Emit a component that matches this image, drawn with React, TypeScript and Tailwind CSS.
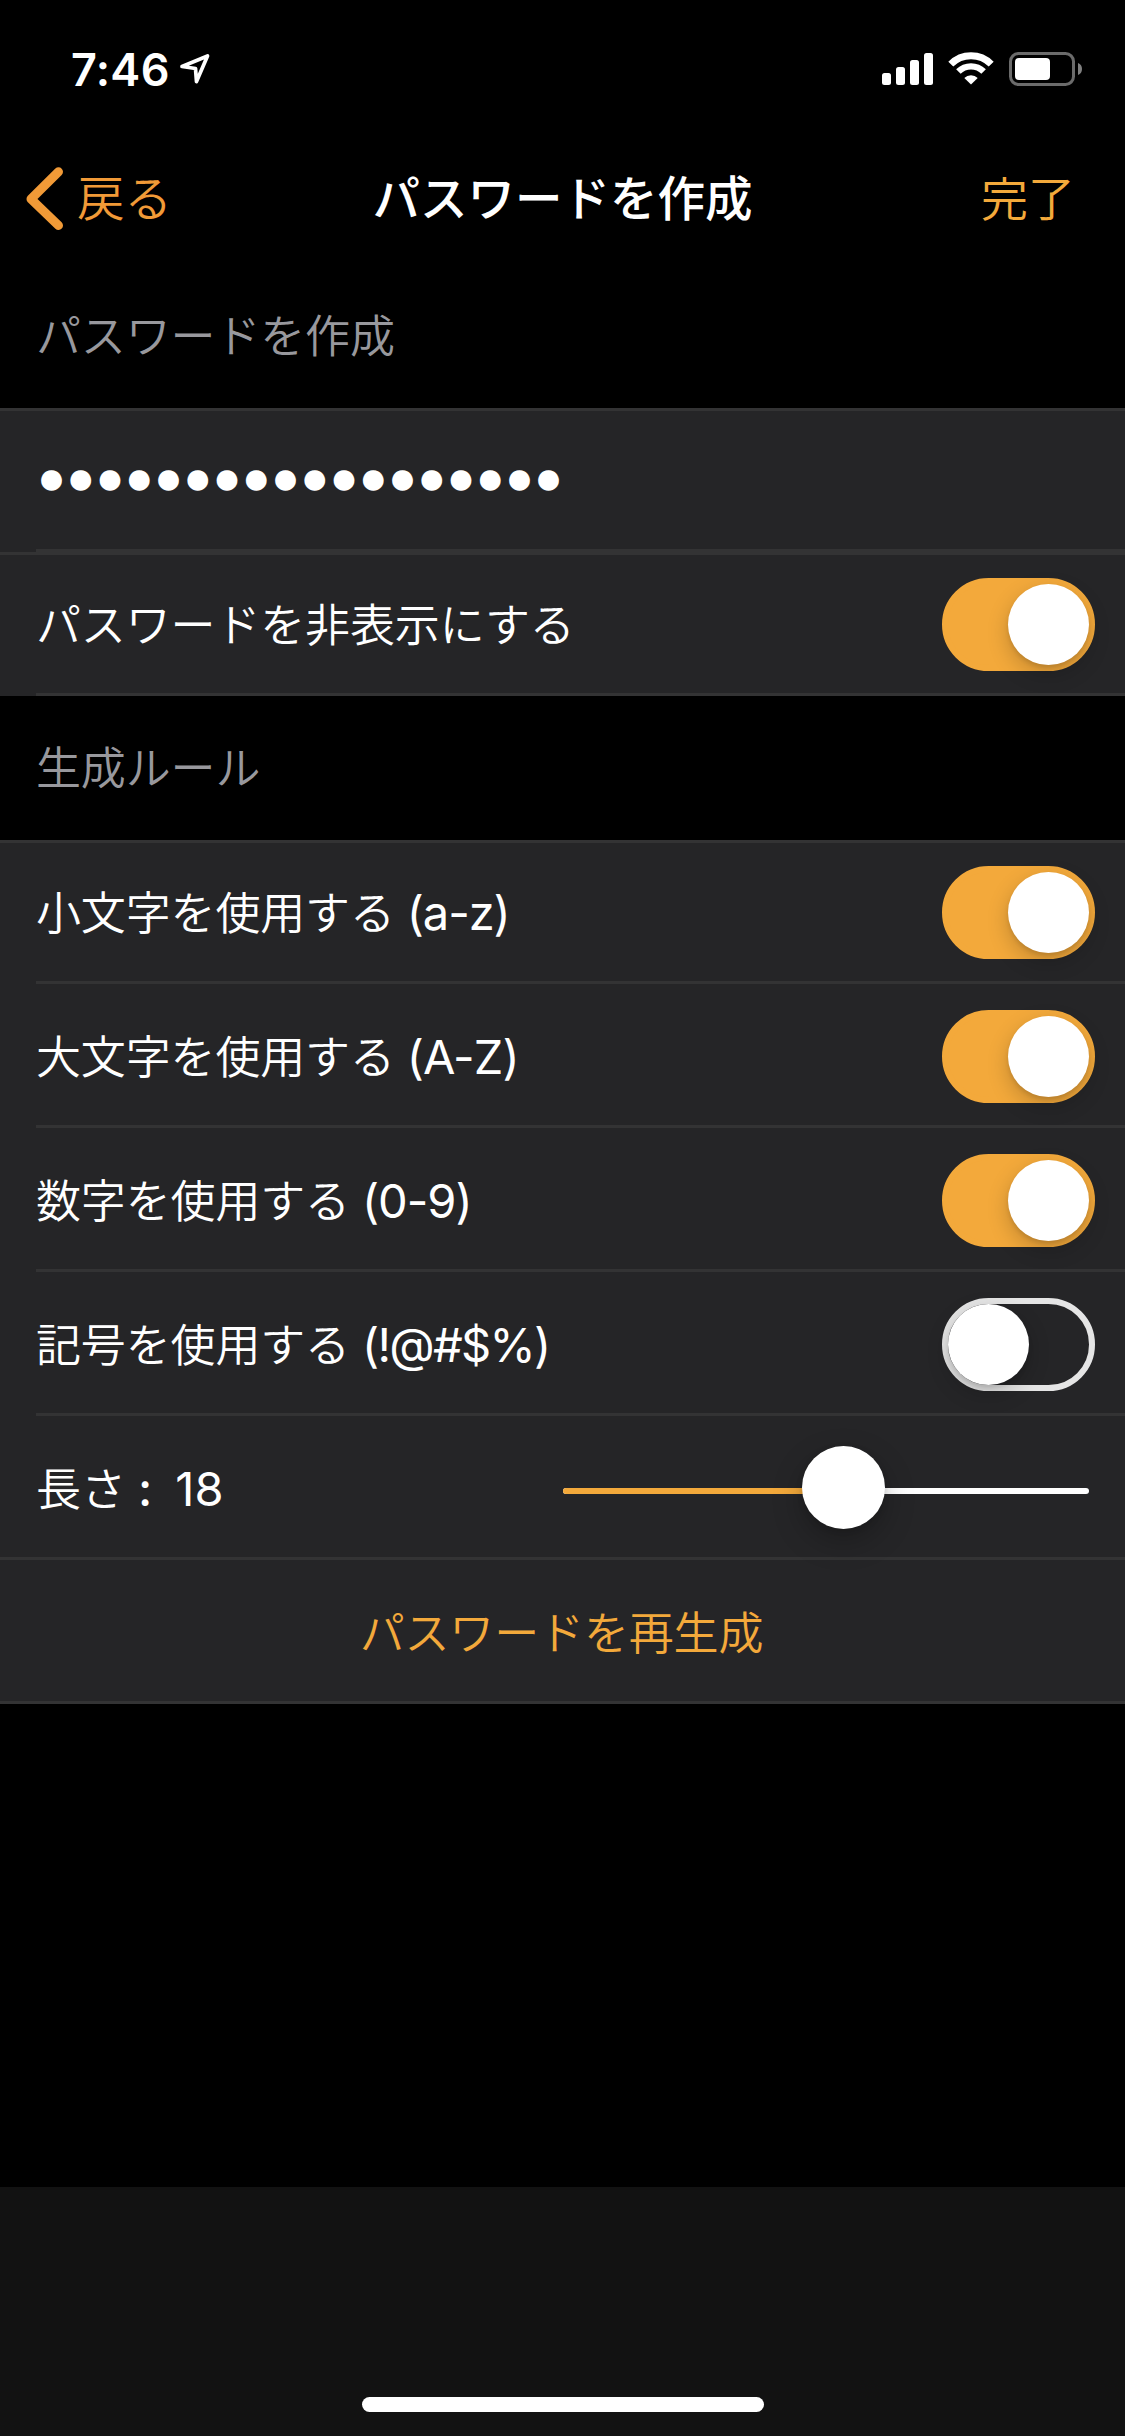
import { useState, type ReactNode } from 'react';

interface Rules {
  lower: boolean;
  upper: boolean;
  digits: boolean;
  symbols: boolean;
}

const MIN_LENGTH = 4;
const MAX_LENGTH = 30;

const ruleRows: { key: keyof Rules; label: string; chars: string; spacing: string }[] = [
  { key: 'lower', label: '小文字を使用する', chars: '(a-z)', spacing: 'tracking-[-1.1px]' },
  { key: 'upper', label: '大文字を使用する', chars: '(A-Z)', spacing: 'tracking-[-0.9px]' },
  { key: 'digits', label: '数字を使用する', chars: '(0-9)', spacing: 'tracking-[-1px]' },
  { key: 'symbols', label: '記号を使用する', chars: '(!@#$%)', spacing: 'tracking-[-1.7px]' },
];

function Switch({ on, onToggle }: { on: boolean; onToggle: () => void }) {
  return (
    <button
      role="switch"
      aria-checked={on}
      onClick={onToggle}
      className={`flex h-[93px] w-[153px] shrink-0 items-center rounded-full border-[6px] ${
        on ? 'justify-end border-[#f3a93b] bg-[#f3a93b]' : 'justify-start border-[#e5e5e5]'
      }`}
    >
      <span className="size-[81px] rounded-full bg-white shadow-[0_8px_22px_rgba(0,0,0,0.2),0_3px_4px_rgba(0,0,0,0.1)]" />
    </button>
  );
}

function Row({ children, top = false, full = false }: { children: ReactNode; top?: boolean; full?: boolean }) {
  return (
    <div className={`flex h-36 border-t-[3px] bg-[#252527] ${top ? 'border-[#333334]' : 'border-[#252527]'}`}>
      <div
        className={`flex flex-1 items-center justify-between border-b-[3px] border-[#333334] pt-[4px] pr-[30px] ${
          full ? 'pl-9' : 'ml-9'
        }`}
      >
        {children}
      </div>
    </div>
  );
}

function SectionTitle({ children }: { children: ReactNode }) {
  return (
    <h2 className="flex h-36 items-center pb-[6px] pl-9 text-[45px] leading-none tracking-[-0.15px] text-[#98989d]">
      {children}
    </h2>
  );
}

function StatusBar() {
  return (
    <div className="flex h-[132px] items-start justify-between pr-[42px] pl-[71px]">
      <div className="flex pt-[47px]">
        <span className="w-[108px] font-['Inter'] text-[45px] leading-[46px] font-semibold tracking-[0.3px]">7:46</span>
        <svg width="32" height="32" viewBox="0 0 32 32" className="mt-[6px]" fill="none">
          <path d="M3 13.5 28.5 3 17.5 28.5 16.5 15.5Z" stroke="#fff" strokeWidth="3.7" strokeLinejoin="round" />
        </svg>
      </div>
      <div className="flex pt-[52px]">
        <svg width="51" height="33" viewBox="0 0 51 33" fill="#fff">
          <rect x="0" y="21" width="9" height="12" rx="2.5" />
          <rect x="14" y="15" width="9" height="18" rx="2.5" />
          <rect x="28" y="8" width="9" height="25" rx="2.5" />
          <rect x="42" y="1" width="9" height="32" rx="2.5" />
        </svg>
        <svg width="46" height="34" viewBox="0 0 46 34" className="ml-[15px]" fill="none" stroke="#fff">
          <path d="M2.8 12.1A28.5 28.5 0 0 1 43.2 12.1" strokeWidth="7" />
          <path d="M10.4 19.6A17.8 17.8 0 0 1 35.6 19.6" strokeWidth="6.4" />
          <path d="M23 32.6 16.3 26A9.5 9.5 0 0 1 29.7 26Z" fill="#fff" stroke="none" />
        </svg>
        <svg width="74" height="34" viewBox="0 0 74 34" className="ml-[15px]">
          <rect x="1.5" y="1.5" width="63" height="31" rx="8" fill="none" stroke="#6b6b6b" strokeWidth="3" />
          <rect x="6" y="6" width="35" height="22" rx="4" fill="#fff" />
          <path d="M69 11c2.700 1 4 3.300 4 6s-1.300 5-4 6z" fill="#808080" />
        </svg>
      </div>
    </div>
  );
}

export default function App() {
  const [hidden, setHidden] = useState(true);
  const [length] = useState(18);
  const [rules, setRules] = useState<Rules>({ lower: true, upper: true, digits: true, symbols: false });

  const toggleRule = (key: keyof Rules) => setRules((prev) => ({ ...prev, [key]: !prev[key] }));

  const percent = ((length - MIN_LENGTH) / (MAX_LENGTH - MIN_LENGTH)) * 100;

  return (
    <div
      lang="ja"
      className="flex h-[2436px] w-[1125px] flex-col bg-black font-['Noto_Sans_CJK_JP',sans-serif] text-[45px] leading-none font-[350] text-white"
    >
      <StatusBar />

      <nav className="grid h-[132px] grid-cols-[1fr_auto_1fr] items-center">
        <button className="flex items-center pl-[26px] text-left text-[#f19a37]">
          <svg width="38" height="64" viewBox="0 0 38 64" fill="none" className="mt-px">
            <path d="M32.500 4.800 5 32 32.500 58.500" stroke="#f19a37" strokeWidth="9" strokeLinecap="round" strokeLinejoin="round" />
          </svg>
          <span className="ml-[13px] pb-[5px] text-[47.500px]">戻る</span>
        </button>
        <h1 className="pb-[5px] text-[47.500px] font-medium">パスワードを作成</h1>
        <button className="pr-[50px] pb-[6px] text-right text-[47px] text-[#f3a93b]">完了</button>
      </nav>

      <main className="flex-1">
        <SectionTitle>パスワードを作成</SectionTitle>
        <Row top>
          <span className="ml-px pb-[10px] font-['DejaVu_Sans'] text-[48px] tracking-[0.250px]">
            {hidden ? '●'.repeat(length) : 'kTz4mWq8RbxN2vLpe7'}
          </span>
        </Row>
        <Row top>
          <span className="pb-[8px] tracking-[-0.15px]">パスワードを非表示にする</span>
          <div className="pb-[3px]">
            <Switch on={hidden} onToggle={() => setHidden(!hidden)} />
          </div>
        </Row>

        <SectionTitle>生成ルール</SectionTitle>
        {ruleRows.map((row, i) => (
          <Row key={row.key} top={i === 0}>
            <span className="flex items-baseline pb-[5px] tracking-[-0.15px]">
              {row.label}
              <span className={`ml-[12px] font-['Inter'] text-[47px] font-normal ${row.spacing}`}>{row.chars}</span>
            </span>
            <div className="pb-[3px]">
              <Switch on={rules[row.key]} onToggle={() => toggleRule(row.key)} />
            </div>
          </Row>
        ))}
        <Row full>
          <span className="flex items-baseline pb-[5px]">
            長さ
            <span className="ml-[12px] font-['Inter'] text-[47px] font-medium">:</span>
            <span className="ml-[23px] font-['Inter'] text-[47px] font-normal">{length}</span>
          </span>
          <div className="relative mt-[2px] mr-[6px] h-[6px] w-[526px] rounded-full bg-white">
            <div className="h-full rounded-full bg-[#f3a93b]" style={{ width: `${percent}%` }} />
            <span
              className="absolute top-[-42px] ml-[-44px] size-[83px] rounded-full bg-white shadow-[0_12px_30px_rgba(0,0,0,0.25),0_2px_6px_rgba(0,0,0,0.12)]"
              style={{ left: `${percent}%` }}
            />
          </div>
        </Row>
        <Row full>
          <button className="flex-1 pr-[2px] pb-[8px] text-center tracking-[-0.15px] text-[#f3a93b]">
            <span className="mr-[6px]">パスワードを再生成</span>
          </button>
        </Row>
      </main>

      <footer className="flex h-[249px] items-end justify-center bg-[#121212] pb-6">
        <div className="h-[15px] w-[402px] rounded-full bg-white" />
      </footer>
    </div>
  );
}
